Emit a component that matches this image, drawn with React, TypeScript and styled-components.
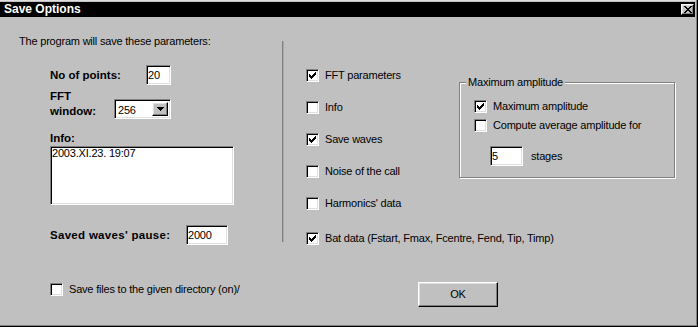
import React, {FC} from 'react';
import styled, {createGlobalStyle, css} from "styled-components";

const GlobalStyle = createGlobalStyle`
  html, body {
    margin: 0;
    padding: 0;
    background: #c0c0c0;
  }
`

const sunken = css`
  box-sizing: border-box;
  border: 1px solid;
  border-color: #808080 #ffffff #ffffff #808080;
  box-shadow: inset 1px 1px #000000, inset -1px -1px #dfdfdf;
  background: #ffffff;
`

const raised = css`
  box-sizing: border-box;
  border: 1px solid;
  border-color: #ffffff #000000 #000000 #ffffff;
  box-shadow: inset -1px -1px #808080, inset 1px 1px #dfdfdf;
  background: #c0c0c0;
`

type CheckProps = {
    label: string
    checked?: boolean
}

const CheckMark: FC = () => (
    <svg width="7" height="7" viewBox="0 0 7 7" shapeRendering="crispEdges">
        <path fill="#000"
              d="M6 0h1v1h-1z M5 1h2v1h-2z M0 2h1v1h-1z M4 2h3v1h-3z M0 3h2v1h-2z M3 3h3v1h-3z M0 4h5v1h-5z M1 5h3v1h-3z M2 6h1v1h-1z"/>
    </svg>
)

const Check: FC<CheckProps> = ({label, checked}) => (
    <StyledCheckRow>
        <StyledBox>{checked && <CheckMark/>}</StyledBox>
        <span>{label}</span>
    </StyledCheckRow>
)

const App: FC = () => {
    const mainChecks = [
        {label: 'FFT parameters', checked: true},
        {label: 'Info', checked: false},
        {label: 'Save waves', checked: true},
        {label: 'Noise of the call', checked: false},
        {label: "Harmonics' data", checked: false},
    ]

    return (
        <>
            <GlobalStyle/>
            <StyledWindow>
                <StyledTitleBar>
                    <span>Save Options</span>
                    <StyledCloseButton>
                        <svg width="8" height="7" viewBox="0 0 8 7" shapeRendering="crispEdges">
                            <path fill="#000"
                                  d="M0 0h2v1h-2z M6 0h2v1h-2z M1 1h2v1h-2z M5 1h2v1h-2z M2 2h4v1h-4z M3 3h2v1h-2z M2 4h4v1h-4z M1 5h2v1h-2z M5 5h2v1h-2z M0 6h2v1h-2z M6 6h2v1h-2z"/>
                        </svg>
                    </StyledCloseButton>
                </StyledTitleBar>

                <StyledBody>
                    <StyledMain>
                        <StyledLeft>
                            <StyledIntro>The program will save these parameters:</StyledIntro>
                            <StyledForm>
                                <StyledFieldRow>
                                    <StyledLabel width={96}>No of points:</StyledLabel>
                                    <StyledInput width={25} defaultValue="20"/>
                                </StyledFieldRow>
                                <StyledComboRow>
                                    <StyledLabel width={64}>FFT<br/>window:</StyledLabel>
                                    <StyledCombo>
                                        <StyledComboText>256</StyledComboText>
                                        <StyledComboButton>
                                            <svg width="7" height="4" viewBox="0 0 7 4" shapeRendering="crispEdges">
                                                <path fill="#000" d="M0 0h7v1h-7z M1 1h5v1h-5z M2 2h3v1h-3z M3 3h1v1h-1z"/>
                                            </svg>
                                        </StyledComboButton>
                                    </StyledCombo>
                                </StyledComboRow>
                                <StyledInfoLabel>Info:</StyledInfoLabel>
                                <StyledTextArea defaultValue="2003.XI.23. 19:07"/>
                                <StyledPauseRow>
                                    <StyledLabel width={136} wide>Saved waves' pause:</StyledLabel>
                                    <StyledInput width={42} defaultValue="2000"/>
                                </StyledPauseRow>
                            </StyledForm>
                        </StyledLeft>

                        <StyledSeparator/>

                        <StyledRight>
                            <StyledCheckList>
                                {mainChecks.map((c, i) => <Check key={i} label={c.label} checked={c.checked}/>)}
                                <StyledLastCheck>
                                    <Check label="Bat data (Fstart, Fmax, Fcentre, Fend, Tip, Timp)" checked/>
                                </StyledLastCheck>
                            </StyledCheckList>

                            <StyledGroup>
                                <StyledGroupTitle>Maximum amplitude</StyledGroupTitle>
                                <StyledGroupChecks>
                                    <Check label="Maximum amplitude" checked/>
                                    <Check label="Compute average amplitude for"/>
                                </StyledGroupChecks>
                                <StyledStagesRow>
                                    <StyledInput width={33} defaultValue="5"/>
                                    <span>stages</span>
                                </StyledStagesRow>
                            </StyledGroup>
                        </StyledRight>
                    </StyledMain>

                    <StyledFooter>
                        <StyledFooterCheck>
                            <Check label="Save files to the given directory (on)/"/>
                        </StyledFooterCheck>
                        <StyledButton>OK</StyledButton>
                    </StyledFooter>
                </StyledBody>
            </StyledWindow>
        </>
    );
};

export default App;

const StyledWindow = styled.div`
  width: 698px;
  height: 327px;
  box-sizing: border-box;
  display: flex;
  flex-direction: column;
  padding: 2px 2px 0 0;
  background: #c0c0c0;
  border-right: 1px solid #000000;
  border-bottom: 1px solid #000000;
  box-shadow: inset -1px -1px #808080, inset 0 1px #dfdfdf;
  font-family: "Liberation Sans", Arial, sans-serif;
  font-size: 11px;
  line-height: 13px;
  letter-spacing: -0.2px;
  color: #000000;
`

const StyledTitleBar = styled.div`
  height: 15px;
  flex-shrink: 0;
  display: flex;
  align-items: center;
  justify-content: space-between;
  padding: 0 1px 0 4px;
  background: #000000;
  color: #ffffff;
  font-weight: bold;
  font-size: 12px;
  letter-spacing: 0;
`

const StyledCloseButton = styled.div`
  ${raised};
  width: 13px;
  height: 11px;
  display: flex;
  align-items: center;
  justify-content: center;
`

const StyledBody = styled.div`
  flex: 1;
  display: flex;
  flex-direction: column;
`

const StyledMain = styled.div`
  display: flex;
  align-items: flex-start;
`

const StyledLeft = styled.div`
  width: 282px;
  padding-top: 18px;
`

const StyledIntro = styled.div`
  padding-left: 19px;
`

const StyledForm = styled.div`
  padding-left: 50px;
  margin-top: 17px;
`

const StyledLabel = styled.div<{ width: number, wide?: boolean }>`
  width: ${p => p.width}px;
  flex-shrink: 0;
  font-weight: bold;
  font-size: 11.5px;
  line-height: 15px;
  letter-spacing: ${p => p.wide ? '0.3px' : '0'};
`

const StyledFieldRow = styled.div`
  display: flex;
  align-items: center;
`

const StyledComboRow = styled.div`
  display: flex;
  align-items: flex-end;
  margin-top: 4px;
`

const StyledPauseRow = styled(StyledFieldRow)`
  margin-top: 20px;
`

const StyledInput = styled.input<{ width: number }>`
  ${sunken};
  width: ${p => p.width}px;
  height: 20px;
  margin: 0;
  padding: 0 1px;
  font: inherit;
  letter-spacing: inherit;
  outline: none;
`

const StyledCombo = styled.div`
  ${sunken};
  width: 57px;
  height: 20px;
  display: flex;
  padding: 2px;
`

const StyledComboText = styled.span`
  flex: 1;
  padding-left: 1px;
  line-height: 16px;
`

const StyledComboButton = styled.div`
  ${raised};
  width: 16px;
  display: flex;
  align-items: center;
  justify-content: center;
`

const StyledInfoLabel = styled.div`
  font-weight: bold;
  font-size: 11.5px;
  line-height: 14px;
  letter-spacing: 0;
  margin-top: 12px;
`

const StyledTextArea = styled.textarea`
  ${sunken};
  display: block;
  width: 184px;
  height: 59px;
  margin: 1px 0 0;
  padding: 0 1px;
  font: inherit;
  letter-spacing: inherit;
  resize: none;
  outline: none;
`

const StyledSeparator = styled.div`
  width: 1px;
  height: 201px;
  margin-top: 24px;
  background: #808080;
  border-right: 1px solid #a8a8a8;
`

const StyledRight = styled.div`
  flex: 1;
  display: flex;
  align-items: flex-start;
  padding-top: 52px;
`

const StyledCheckList = styled.div`
  width: 153px;
  padding-left: 22px;
  display: flex;
  flex-direction: column;
  gap: 19px;
  white-space: nowrap;
`

const StyledLastCheck = styled.div`
  margin-top: 3px;
`

const StyledCheckRow = styled.div`
  display: flex;
  align-items: center;
  gap: 6px;
  height: 13px;
`

const StyledBox = styled.span`
  ${sunken};
  width: 13px;
  height: 13px;
  flex-shrink: 0;
  display: flex;
  align-items: center;
  justify-content: center;
`

const StyledGroup = styled.div`
  position: relative;
  box-sizing: border-box;
  width: 216px;
  height: 96px;
  margin-top: 13px;
  padding: 17px 0 0 14px;
  border: 1px solid #808080;
  box-shadow: inset 1px 1px #ffffff, 1px 1px #ffffff;
`

const StyledGroupTitle = styled.span`
  position: absolute;
  top: -7px;
  left: 6px;
  padding: 0 2px;
  background: #c0c0c0;
`

const StyledGroupChecks = styled.div`
  display: flex;
  flex-direction: column;
  gap: 6px;
`

const StyledStagesRow = styled.div`
  display: flex;
  align-items: center;
  gap: 8px;
  margin: 14px 0 0 16px;
`

const StyledFooter = styled.div`
  display: grid;
  grid-template-columns: 368px 80px;
  align-items: start;
  padding-left: 50px;
  margin-top: 37px;
`

const StyledFooterCheck = styled.div`
  margin-top: 1px;
`

const StyledButton = styled.button`
  ${raised};
  width: 80px;
  height: 25px;
  margin: 0;
  padding: 0;
  font: inherit;
  letter-spacing: inherit;
  color: #000000;
`
